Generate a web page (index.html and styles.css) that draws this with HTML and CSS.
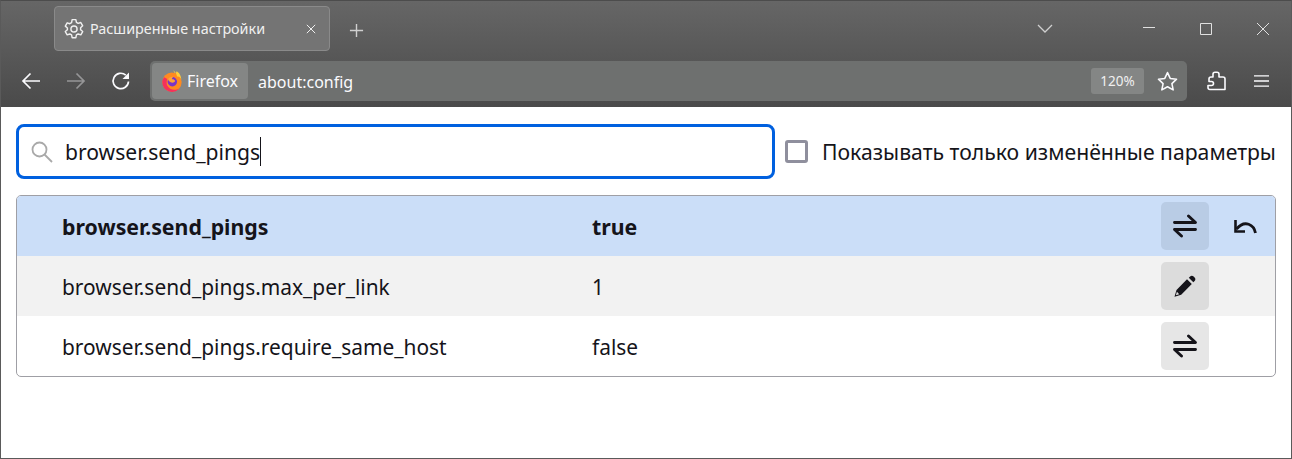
FILE: index.html
```html
<!DOCTYPE html>
<html lang="ru">
<head>
    <meta charset="UTF-8">
    <title>Расширенные настройки</title>
    <link rel="stylesheet" href="styles.css">
</head>
<body>
    <div class="window">
        <div class="chrome">
            <!-- Tab strip -->
            <div class="tabbar">
                <div class="tab">
                    <svg class="tab-icon" viewBox="0 0 20 20" fill="none" stroke="currentColor" stroke-width="1.3" stroke-linejoin="round"><path d="M8.3 1.5h3.4l.5 2.500 1.600.9 2.400-.8 1.700 3-1.900 1.700v1.800l1.900 1.700-1.700 3-2.400-.8-1.600.9-.5 2.500H8.300l-.5-2.500-1.600-.9-2.400.8-1.700-3 1.900-1.700V9.100L2.100 7.400l1.700-3 2.400.8 1.600-.9z"/><circle cx="10" cy="10" r="2.800"/></svg>
                    <span class="tab-title">Расширенные настройки</span>
                    <svg class="tab-close" viewBox="0 0 12 12" stroke="currentColor" stroke-width="1.2"><path d="M1 1l10 10M11 1L1 11"/></svg>
                </div>
                <svg class="new-tab" viewBox="0 0 16 16" stroke="currentColor" stroke-width="1.5"><path d="M8 1v14M1 8h14"/></svg>
                <div class="spacer"></div>
                <svg class="tab-list" viewBox="0 0 16 10" fill="none" stroke="currentColor" stroke-width="1.3"><path d="M1 1l7 7 7-7"/></svg>
                <div class="win-controls">
                    <svg viewBox="0 0 12 12" stroke="currentColor" stroke-width="1"><path d="M0 4.500h12"/></svg>
                    <svg viewBox="0 0 12 12" fill="none" stroke="currentColor" stroke-width="1"><path d="M.5.5h11v11H.5z"/></svg>
                    <svg viewBox="0 0 12 12" stroke="currentColor" stroke-width="1"><path d="M0 0l12 12M12 0L0 12"/></svg>
                </div>
            </div>
            <!-- Navigation toolbar -->
            <div class="toolbar">
                <svg class="nav-btn" viewBox="0 0 20 20" fill="none" stroke="currentColor" stroke-width="1.7"><path d="M19 10H2M9.500 2.500L2 10l7.500 7.500"/></svg>
                <svg class="nav-btn nav-off" viewBox="0 0 20 20" fill="none" stroke="currentColor" stroke-width="1.7"><path d="M1 10h17M10.500 2.500L18 10l-7.500 7.500"/></svg>
                <svg class="nav-btn" viewBox="0 0 20 20" fill="none" stroke="currentColor" stroke-width="1.7"><path d="M17.500 10.500A7.700 7.700 0 1 1 14.800 4.100"/><path d="M18 1.500v6.500h-6.500z" fill="currentColor" stroke="none"/></svg>
                <div class="urlbar">
                    <div class="identity">
                        <svg class="ff-logo" viewBox="0 0 20 20">
                            <circle cx="10" cy="11" r="8.800" fill="#ff8a1f"/>
                            <path d="M1.200 11a8.800 8.800 0 0 0 15.500 5.700c-4 2.500-9 1.500-11-2.500-1-2-.5-4.500 0-6L3 6.500c-1 1-1.800 2.800-1.800 4.500z" fill="#f5305c"/>
                            <path d="M11 .3c2.500 2 3.500 3.700 3.500 5.700 2-.5 3.500 1 4 3-.1-3.500-2-7-4.500-7.800.3 1-.6 1.500-1.500 1.500z" fill="#ffcf3a"/>
                            <circle cx="10.300" cy="10.700" r="4.300" fill="#7a35c8"/>
                            <path d="M6.500 8c1-1.500 3-2.300 5-1.800-1 .7-1.800 1.300-1.500 2.300.7-.3 2.500.2 2.800 1.500-.5 1.500-2.500 2-4 1.200-1.500-.7-2.500-1.800-2.300-3.200z" fill="#ffa436"/>
                        </svg>
                        <span>Firefox</span>
                    </div>
                    <span class="url">about:config</span>
                    <span class="zoom-badge">120%</span>
                    <svg class="star" viewBox="0 0 20 20" fill="none" stroke="currentColor" stroke-width="1.500" stroke-linejoin="round"><path d="M10 1.500l2.600 5.600 6 .7-4.400 4.200 1.200 6L10 15l-5.400 3 1.200-6L1.400 7.800l6-.7z"/></svg>
                </div>
                <svg class="ext-btn" viewBox="0 0 20 20" fill="none" stroke="currentColor" stroke-width="1.600" stroke-linejoin="round"><path d="M6 3.200c0-1 .8-2 2-2h2c1.200 0 2 1 2 2V6h4c1 0 2 1 2 2v10.500H3c-1 0-2-.8-2-2v-2h3.500c1 0 2-.8 2-2s-1-2-2-2H2V8c0-1 1-2 2-2h2z"/></svg>
                <svg class="menu-btn" viewBox="0 0 16 14" stroke="currentColor" stroke-width="1.500"><path d="M0 1.500h16M0 7h16M0 12.500h16"/></svg>
            </div>
        </div>

        <div class="content">
            <div class="search-row">
                <div class="search-box">
                    <svg class="search-icon" viewBox="0 0 22 22" fill="none" stroke="currentColor" stroke-width="1.800"><circle cx="8.500" cy="8.500" r="7"/><path d="M13.500 13.500l7.500 7.500"/></svg>
                    <span class="search-text">browser.send_pings</span><span class="caret"></span>
                </div>
                <label class="only-changed"><span class="checkbox"></span>Показывать только изменённые параметры</label>
            </div>

            <div class="prefs">
                <div class="pref pref-modified">
                    <span class="pref-name">browser.send_pings</span>
                    <span class="pref-value">true</span>
                    <button class="pref-btn"><svg viewBox="0 0 24 24" fill="none" stroke="currentColor" stroke-width="2.900" stroke-linecap="round" stroke-linejoin="round"><path d="M1.500 8.500h21l-7-6.500M22.500 15.500h-21l7 6.500"/></svg></button>
                    <button class="reset-btn"><svg viewBox="0 0 24 16" fill="none" stroke="currentColor" stroke-width="2.800" stroke-linejoin="miter"><path d="M22.500 15C21 7 12 1 3.500 11"/><path d="M2.500 2v11.500H12" stroke-width="2.600"/></svg></button>
                </div>
                <div class="pref pref-alt">
                    <span class="pref-name">browser.send_pings.max_per_link</span>
                    <span class="pref-value">1</span>
                    <button class="pref-btn"><svg viewBox="0 0 22 22" fill="currentColor"><path d="M14.800 2.800l1.300-1.300c1-1 2.500-1 3.500 0l1 1c1 1 1 2.500 0 3.500l-1.300 1.300zM13 4.300l4.800 4.800L7.200 19.700l-6.700 2 2-6.800zM2.900 16.800l-1 3.400 3.300-1z"/></svg></button>
                    <span class="reset-slot"></span>
                </div>
                <div class="pref">
                    <span class="pref-name">browser.send_pings.require_same_host</span>
                    <span class="pref-value">false</span>
                    <button class="pref-btn"><svg viewBox="0 0 24 24" fill="none" stroke="currentColor" stroke-width="2.900" stroke-linecap="round" stroke-linejoin="round"><path d="M1.500 8.500h21l-7-6.500M22.500 15.500h-21l7 6.500"/></svg></button>
                    <span class="reset-slot"></span>
                </div>
            </div>
        </div>
    </div>
</body>
</html>
```

FILE: styles.css
```css
* {
    box-sizing: border-box;
}
body {
    margin: 0;
    font-family: "Noto Sans", Arial, sans-serif;
    background-color: #fff;
}
svg {
    display: block;
    flex-shrink: 0;
}
.window {
    height: 459px;
    border: 1px solid #5a5a5a;
    border-top-color: #4c4c4c;
    display: flex;
    flex-direction: column;
}
.chrome {
    height: 106px;
    background: linear-gradient(#666666, #4a4a4a);
    color: #fbfbfe;
    flex-shrink: 0;
}
.tabbar {
    height: 60px;
    display: flex;
    align-items: flex-start;
    padding: 5px 0 0 53px;
}
.tab {
    width: 276px;
    height: 45px;
    background: #747474;
    border: 1px solid #8a8a8a;
    border-radius: 4px;
    display: flex;
    align-items: center;
    padding: 0 13px 0 8px;
    color: #f0f0f0;
}
.tab-icon {
    width: 22px;
    height: 22px;
}
.tab-title {
    margin-left: 5px;
    font-size: 14.350px;
    flex: 1;
    white-space: nowrap;
}
.tab-close {
    width: 10px;
    height: 10px;
}
.new-tab {
    width: 15px;
    height: 15px;
    margin: 17px 0 0 19px;
    color: #cfcfcf;
}
.spacer {
    flex: 1;
}
.tab-list {
    width: 16px;
    height: 10px;
    margin-top: 18px;
    color: #d0d0d0;
}
.win-controls {
    display: flex;
    gap: 45px;
    margin: 17px 22px 0 90px;
    color: #e0e0e0;
}
.win-controls svg {
    width: 12px;
    height: 12px;
}
.toolbar {
    height: 40px;
    display: flex;
    align-items: center;
    padding-left: 20px;
}
.nav-btn {
    width: 20px;
    height: 20px;
    margin-right: 25px;
}
.nav-off {
    opacity: 0.4;
}
.urlbar {
    width: 1037px;
    height: 40px;
    margin-left: -6px;
    background: #6e706f;
    border-radius: 5px;
    display: flex;
    align-items: center;
    padding: 2px 8px 0 2px;
}
.identity {
    width: 96px;
    height: 36px;
    margin-top: -2px;
    background: #848685;
    border-radius: 4px;
    display: flex;
    align-items: center;
    padding-left: 9px;
    font-size: 16px;
    gap: 4px;
}
.ff-logo {
    width: 22px;
    height: 22px;
}
.url {
    margin-left: 10px;
    font-size: 16px;
    flex: 1;
}
.zoom-badge {
    width: 53px;
    height: 26px;
    background: #848685;
    border-radius: 3px;
    font-size: 13.500px;
    color: #f0f0f0;
    display: flex;
    align-items: center;
    justify-content: center;
    margin-top: -2px;
}
.star {
    width: 21px;
    height: 21px;
    margin: -2px 1px 0 13px;
}
.ext-btn {
    width: 20px;
    height: 20px;
    margin-left: 20px;
}
.menu-btn {
    width: 15px;
    height: 14px;
    margin-left: 27px;
}
.content {
    flex: 1;
    padding: 17px 15px 0;
}
.search-row {
    display: flex;
    align-items: center;
}
.search-box {
    width: 759px;
    height: 55px;
    border: 3px solid #0060df;
    border-radius: 8px;
    display: flex;
    align-items: center;
    padding-left: 12px;
    color: #15141a;
}
.search-icon {
    width: 22px;
    height: 22px;
    color: #a9a9a9;
    margin-right: 12px;
}
.search-text {
    font-size: 21.100px;
}
.caret {
    width: 1px;
    height: 29px;
    background: #15141a;
}
.only-changed {
    display: flex;
    align-items: center;
    margin-left: 10px;
    font-size: 21.200px;
    color: #15141a;
    white-space: nowrap;
}
.checkbox {
    width: 23px;
    height: 23px;
    border: 3px solid #8f8f9d;
    border-radius: 3px;
    margin-right: 14px;
}
.prefs {
    margin-top: 16px;
    width: 1260px;
    border: 1px solid #9f9fa5;
    border-radius: 5px;
    overflow: hidden;
    color: #15141a;
}
.pref {
    height: 60px;
    display: flex;
    align-items: center;
    padding-left: 45px;
    font-size: 20.900px;
}
.pref-modified {
    background: #cbdef8;
    font-size: 21.300px;
    font-weight: 700;
}
.pref-alt {
    background: #f2f2f2;
}
.pref-name {
    width: 530px;
    padding-top: 2px;
    white-space: nowrap;
}
.pref-value {
    flex: 1;
    padding-top: 2px;
}
.pref-modified .pref-name,
.pref-modified .pref-value {
    padding-top: 0;
}
.pref-btn {
    width: 48px;
    height: 48px;
    padding: 0;
    border: none;
    border-radius: 5px;
    background: #e6e6e6;
    color: #15141a;
    display: flex;
    align-items: center;
    justify-content: center;
}
.pref-alt .pref-btn {
    background: #dcdcdc;
}
.pref-modified .pref-btn {
    background: #b9cce5;
}
.pref-btn svg {
    width: 24px;
    height: 24px;
}
.pref-alt .pref-btn svg {
    width: 22px;
    height: 22px;
}
.reset-btn {
    width: 48px;
    height: 48px;
    margin: 0 6px 0 12px;
    padding: 0;
    border: none;
    background: none;
    color: #15141a;
    display: flex;
    align-items: center;
    justify-content: center;
}
.reset-btn svg {
    width: 24px;
    height: 16px;
}
.reset-slot {
    width: 66px;
}
```
